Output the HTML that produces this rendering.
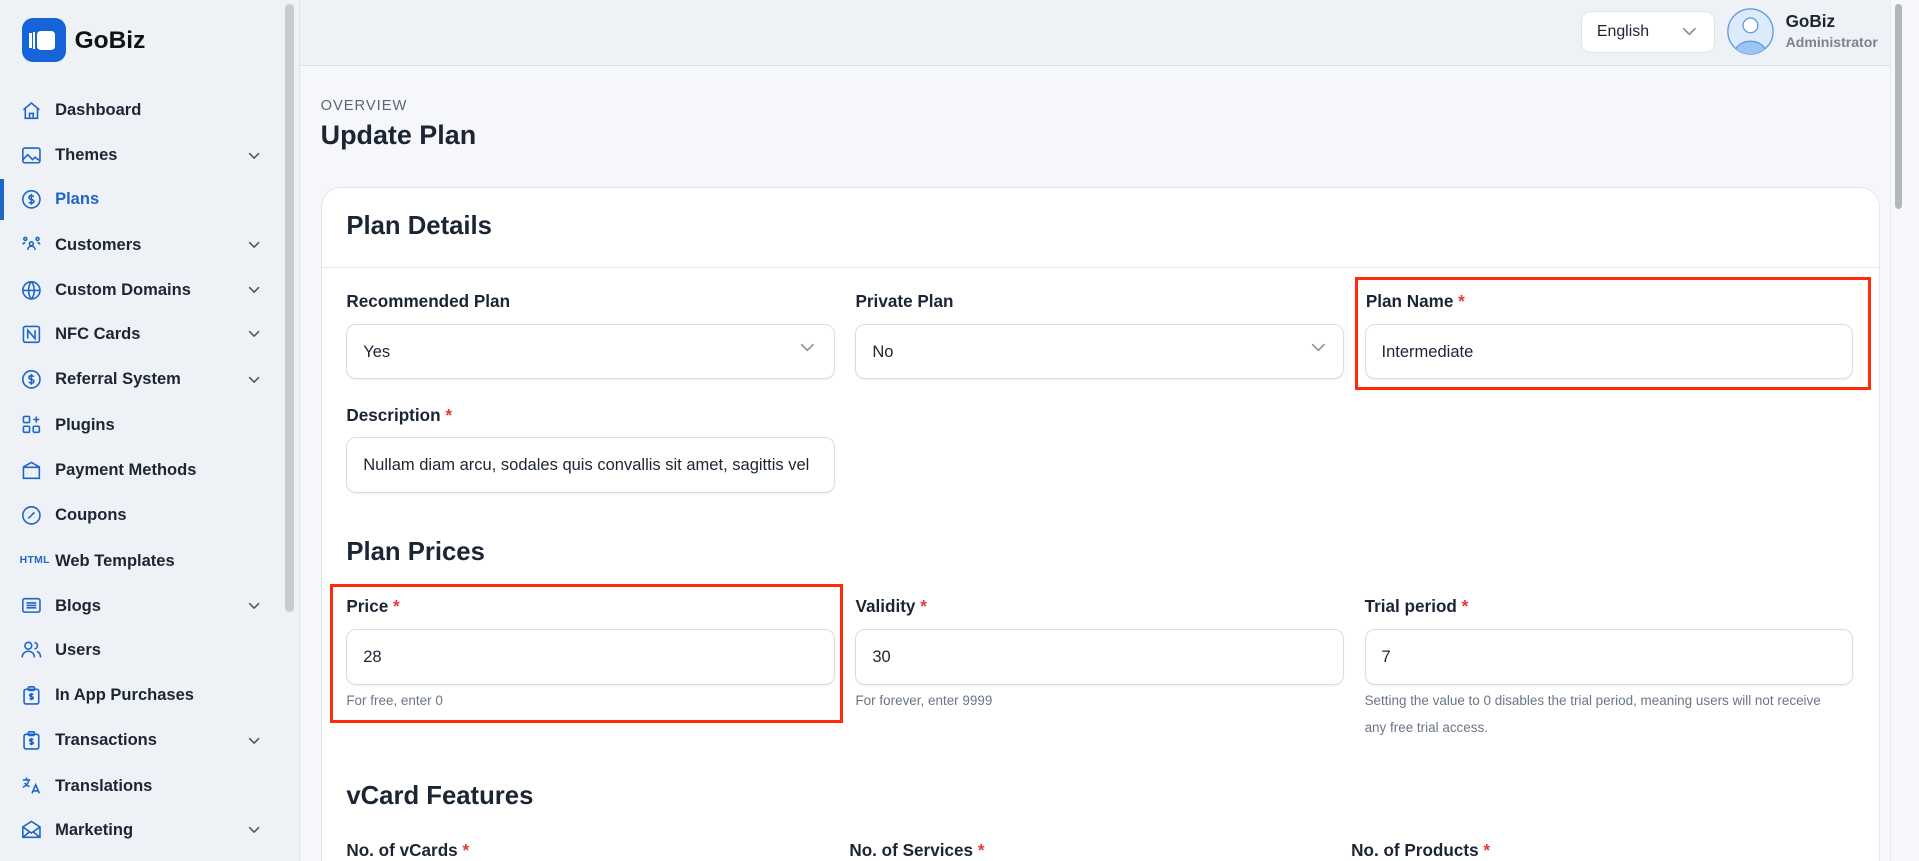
<!DOCTYPE html>
<html><head><meta charset="utf-8"><style>
*{box-sizing:border-box;margin:0;padding:0}
html,body{width:1919px;height:861px;overflow:hidden;background:#f5f7fa}
#r{width:1568px;height:704px;zoom:1.22385;position:relative;font-family:"Liberation Sans",sans-serif;color:#1b2533;background:#f5f7fa;overflow:hidden}
.a{position:absolute}
.sb{left:0;top:0;width:245px;height:704px;background:#eef2f6;border-right:1px solid #e1e6ec}
.nav{left:0;width:245px;height:30px;font-size:13.5px;font-weight:bold;color:#1b2533;display:flex;align-items:center}
.nav span{position:absolute;left:45px}
.nav svg{position:absolute;left:17px;width:17px;height:17px;fill:none;stroke:#1f66c6;stroke-width:1.3}
.nav svg.chev{left:203px;width:10px;height:6px;stroke:#555;stroke-width:1.3}
.lbl{font-size:14px;font-weight:bold;color:#1b2533}
.st{color:#e53935}
.in{background:#fff;border:1px solid #d8dde5;border-radius:8px;height:46px;font-size:13.5px;display:flex;align-items:center;padding-left:13px;color:#1b2533;box-shadow:0 1px 1px rgba(0,0,0,.04)}
.help{font-size:11px;color:#6b7684}
h2{position:absolute;font-size:21px;font-weight:bold;color:#1b2533}
.red{border:3px solid #ff2a0a}
</style></head><body><div id="r">
<div class="a sb"></div>
<div class="a" style="left:233px;top:3px;width:7px;height:497px;background:#c7cbd0;border-radius:4px"></div>
<div class="a" style="left:18px;top:15px;width:36px;height:36px;background:#1565d8;border-radius:9px"></div>
<div class="a" style="left:30px;top:25px;width:15px;height:16px;background:#fff;border-radius:3px"></div>
<div class="a" style="left:24px;top:27px;width:2px;height:12px;background:#fff"></div>
<div class="a" style="left:27px;top:26px;width:2px;height:14px;background:#fff"></div>
<div class="a" style="left:61px;top:22px;font-size:20px;font-weight:bold;color:#111">GoBiz</div>
<div class="a" style="left:0;top:146px;width:3px;height:34px;background:#1f66c6"></div>

<div class="a nav" style="top:75px"><svg viewBox="0 0 17 17"><path d="M2 8L8.5 2.5 15 8M3.5 7v8h10V7M7 15v-4h3v4"/></svg><span>Dashboard</span></div>
<div class="a nav" style="top:112px"><svg viewBox="0 0 17 17"><rect x="1.5" y="2.5" width="14" height="12" rx="1.5"/><path d="M1.5 12l4-4 4 4 2-2 4 3"/></svg><span>Themes</span><svg class="chev" viewBox="0 0 10 6"><path d="M1 1l4 4 4-4"/></svg></div>
<div class="a nav" style="top:148px;color:#1f66c6"><svg viewBox="0 0 17 17"><circle cx="8.5" cy="8.5" r="7"/><path d="M10.5 6.3c-.5-.6-1.2-.8-2-.8-1.2 0-2 .6-2 1.5 0 2 4 1 4 3 0 1-.9 1.5-2 1.5-.9 0-1.6-.3-2.1-.9M8.5 4v9"/></svg><span>Plans</span></div>
<div class="a nav" style="top:185px"><svg viewBox="0 0 17 17"><circle cx="8.5" cy="8" r="1.6"/><circle cx="3.5" cy="4" r="1.2"/><circle cx="13.5" cy="4" r="1.2"/><path d="M5.5 13c0-2 1.3-3 3-3s3 1 3 3M1.5 8.5c.5-1 1.2-1.5 2-1.5M15.5 8.5c-.5-1-1.2-1.5-2-1.5"/></svg><span>Customers</span><svg class="chev" viewBox="0 0 10 6"><path d="M1 1l4 4 4-4"/></svg></div>
<div class="a nav" style="top:222px"><svg viewBox="0 0 17 17"><circle cx="8.5" cy="8.5" r="7"/><path d="M1.5 8.5h14M8.5 1.5c-3 3-3 11 0 14M8.5 1.5c3 3 3 11 0 14"/></svg><span>Custom Domains</span><svg class="chev" viewBox="0 0 10 6"><path d="M1 1l4 4 4-4"/></svg></div>
<div class="a nav" style="top:258px"><svg viewBox="0 0 17 17"><rect x="2" y="2" width="13" height="13" rx="1.5"/><path d="M5.5 12V5l6 7V5"/></svg><span>NFC Cards</span><svg class="chev" viewBox="0 0 10 6"><path d="M1 1l4 4 4-4"/></svg></div>
<div class="a nav" style="top:295px"><svg viewBox="0 0 17 17"><circle cx="8.5" cy="8.5" r="7"/><path d="M10.5 6.3c-.5-.6-1.2-.8-2-.8-1.2 0-2 .6-2 1.5 0 2 4 1 4 3 0 1-.9 1.5-2 1.5-.9 0-1.6-.3-2.1-.9M8.5 4v9"/></svg><span>Referral System</span><svg class="chev" viewBox="0 0 10 6"><path d="M1 1l4 4 4-4"/></svg></div>
<div class="a nav" style="top:332px"><svg viewBox="0 0 17 17"><rect x="2" y="2" width="5" height="5" rx="1"/><rect x="2" y="10" width="5" height="5" rx="1"/><rect x="10" y="10" width="5" height="5" rx="1"/><path d="M12.5 2v5M10 4.5h5"/></svg><span>Plugins</span></div>
<div class="a nav" style="top:369px"><svg viewBox="0 0 17 17"><path d="M1.5 6L8.5 2l7 4M2 6h13v9H2zM5 11h.1M8.5 11h.1M12 11h.1"/></svg><span>Payment Methods</span></div>
<div class="a nav" style="top:406px"><svg viewBox="0 0 17 17"><circle cx="8.5" cy="8.5" r="7"/><path d="M6 11l5-5M6.3 6.5h.1M10.7 10.5h.1"/></svg><span>Coupons</span></div>
<div class="a nav" style="top:443px"><span style="left:16px;font-size:8.5px;color:#1f66c6;font-weight:bold;letter-spacing:.3px">HTML</span><span>Web Templates</span></div>
<div class="a nav" style="top:480px"><svg viewBox="0 0 17 17"><rect x="1.5" y="3" width="14" height="11" rx="1.5"/><path d="M4.5 6.5h8M4.5 8.5h8M4.5 10.5h8"/></svg><span>Blogs</span><svg class="chev" viewBox="0 0 10 6"><path d="M1 1l4 4 4-4"/></svg></div>
<div class="a nav" style="top:516px"><svg viewBox="0 0 17 17"><circle cx="6" cy="5.5" r="2.8"/><path d="M1 15c0-3 2.2-5 5-5s5 2 5 5M11 3a2.5 2.5 0 010 5M13 10c1.7.7 3 2.3 3 5"/></svg><span>Users</span></div>
<div class="a nav" style="top:553px"><svg viewBox="0 0 17 17"><rect x="2.5" y="3.5" width="12" height="12" rx="1.5"/><rect x="6" y="1.5" width="5" height="3" rx="1"/><path d="M10 8c-.3-.4-.8-.6-1.5-.6-.8 0-1.4.4-1.4 1 0 1.4 2.9.8 2.9 2.1 0 .6-.6 1-1.5 1-.6 0-1.1-.2-1.5-.6M8.5 6.5v6"/></svg><span>In App Purchases</span></div>
<div class="a nav" style="top:590px"><svg viewBox="0 0 17 17"><rect x="2.5" y="3.5" width="12" height="12" rx="1.5"/><rect x="6" y="1.5" width="5" height="3" rx="1"/><path d="M10 8c-.3-.4-.8-.6-1.5-.6-.8 0-1.4.4-1.4 1 0 1.4 2.9.8 2.9 2.1 0 .6-.6 1-1.5 1-.6 0-1.1-.2-1.5-.6M8.5 6.5v6"/></svg><span>Transactions</span><svg class="chev" viewBox="0 0 10 6"><path d="M1 1l4 4 4-4"/></svg></div>
<div class="a nav" style="top:627px"><svg viewBox="0 0 17 17"><path d="M1.5 4h6M4.5 2v2M6.5 4c-.5 3-2.5 5-5 6M3 6.5c1 1.5 2.5 2.5 4 3M9 15l3-7 3 7M10 13h4"/></svg><span>Translations</span></div>
<div class="a nav" style="top:663px"><svg viewBox="0 0 17 17"><path d="M1.5 6.5L8.5 2l7 4.5V15h-14zM1.5 6.5l7 5 7-5M1.5 15l5.5-4.5M15.5 15L10 10.5"/></svg><span>Marketing</span><svg class="chev" viewBox="0 0 10 6"><path d="M1 1l4 4 4-4"/></svg></div>

<div class="a" style="left:245px;top:0;width:1299px;height:54px;background:#eef2f6;border-bottom:1px solid #dde2e8"></div>
<div class="a" style="left:1544px;top:0;width:24px;height:704px;background:#f5f7fa;border-left:1px solid #e6e9ee"></div>
<div class="a" style="left:1548px;top:3px;width:6px;height:168px;background:#b3b7bc;border-radius:3px"></div>
<div class="a" style="left:1292px;top:9px;width:109px;height:34px;background:#fff;border:1px solid #e1e5ea;border-radius:8px;font-size:13px;padding:9px 0 0 12px;color:#1b2533">English</div>
<svg class="a" style="left:1374px;top:22px" width="12" height="8" viewBox="0 0 12 8" fill="none" stroke="#8a929c" stroke-width="1.4"><path d="M1 1l5 5 5-5"/></svg>
<svg class="a" style="left:1410px;top:6px" width="40" height="40" viewBox="0 0 40 40"><defs><clipPath id="c"><circle cx="20" cy="20" r="18.5"/></clipPath></defs><circle cx="20" cy="20" r="18.5" fill="#dcebfb" stroke="#5a97dc" stroke-width="1"/><g clip-path="url(#c)"><ellipse cx="20" cy="38" rx="13" ry="10" fill="#9ac5f4" stroke="#5a97dc"/></g><circle cx="20" cy="15" r="6" fill="#fff" stroke="#5a97dc"/></svg>
<div class="a" style="left:1459px;top:9px;font-size:14px;font-weight:bold">GoBiz</div>
<div class="a" style="left:1459px;top:28px;font-size:11.5px;font-weight:bold;color:#7a8390">Administrator</div>

<div class="a" style="left:262px;top:80px;font-size:12px;color:#5b6674;letter-spacing:.8px">OVERVIEW</div>
<div class="a" style="left:262px;top:98px;font-size:22px;font-weight:bold">Update Plan</div>

<div class="a" style="left:262px;top:153px;width:1274px;height:551px;background:#fff;border:1px solid #e3e7ec;border-bottom:none;border-radius:16px 16px 0 0"></div>
<h2 style="left:283px;top:173px">Plan Details</h2>
<div class="a" style="left:263px;top:218px;width:1272px;height:1px;background:#e3e7ec"></div>

<div class="a lbl" style="left:283px;top:238px">Recommended Plan</div>
<div class="a in" style="left:283px;top:265px;width:399px;height:45px">Yes</div>
<svg class="a" style="left:654px;top:280px" width="12" height="8" viewBox="0 0 12 8" fill="none" stroke="#8a929c" stroke-width="1.3"><path d="M1 1l5 5 5-5"/></svg>
<div class="a lbl" style="left:699px;top:238px">Private Plan</div>
<div class="a in" style="left:699px;top:265px;width:399px;height:45px">No</div>
<svg class="a" style="left:1071px;top:280px" width="12" height="8" viewBox="0 0 12 8" fill="none" stroke="#8a929c" stroke-width="1.3"><path d="M1 1l5 5 5-5"/></svg>
<div class="a lbl" style="left:1116px;top:238px">Plan Name <span class="st">*</span></div>
<div class="a in" style="left:1115px;top:265px;width:399px;height:45px">Intermediate</div>
<div class="a red" style="left:1107px;top:226px;width:422px;height:93px"></div>

<div class="a lbl" style="left:283px;top:331px">Description <span class="st">*</span></div>
<div class="a in" style="left:283px;top:357px;width:399px;height:46px;white-space:nowrap;overflow:hidden">Nullam diam arcu, sodales quis convallis sit amet, sagittis vel</div>

<h2 style="left:283px;top:440px">Plan Prices</h2>
<div class="a lbl" style="left:283px;top:487px">Price <span class="st">*</span></div>
<div class="a in" style="left:283px;top:514px;width:399px;height:46px">28</div>
<div class="a help" style="left:283px;top:566px">For free, enter 0</div>
<div class="a red" style="left:270px;top:477px;width:419px;height:114px"></div>
<div class="a lbl" style="left:699px;top:487px">Validity <span class="st">*</span></div>
<div class="a in" style="left:699px;top:514px;width:399px;height:46px">30</div>
<div class="a help" style="left:699px;top:566px">For forever, enter 9999</div>
<div class="a lbl" style="left:1115px;top:487px">Trial period <span class="st">*</span></div>
<div class="a in" style="left:1115px;top:514px;width:399px;height:46px">7</div>
<div class="a help" style="left:1115px;top:562px;width:380px;line-height:22px">Setting the value to 0 disables the trial period, meaning users will not receive any free trial access.</div>

<h2 style="left:283px;top:639px">vCard Features</h2>
<div class="a lbl" style="left:283px;top:686px">No. of vCards <span class="st">*</span></div>
<div class="a lbl" style="left:694px;top:686px">No. of Services <span class="st">*</span></div>
<div class="a lbl" style="left:1104px;top:686px">No. of Products <span class="st">*</span></div>
</div></body></html>
